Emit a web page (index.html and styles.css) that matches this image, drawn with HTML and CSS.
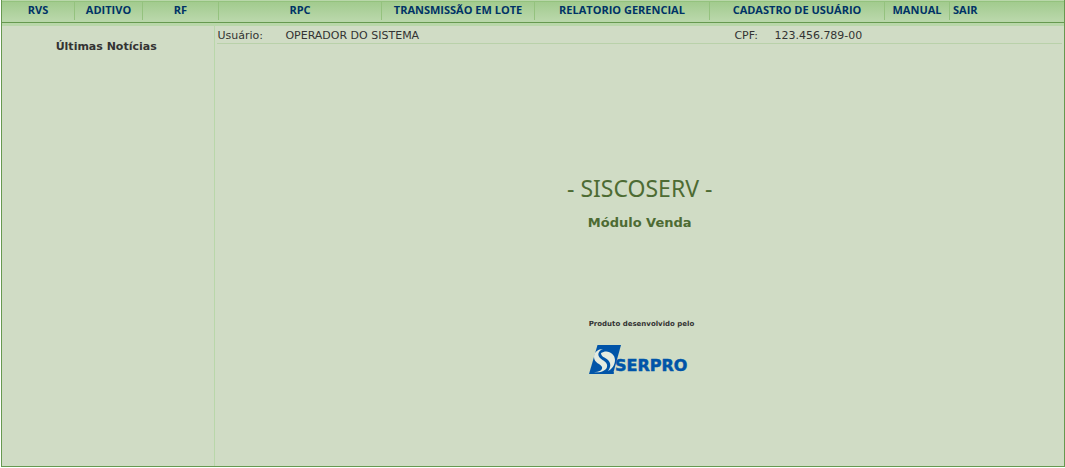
FILE: index.html
```html
<!DOCTYPE html>
<html lang="pt-BR">
<head>
<meta charset="utf-8">
<title>SISCOSERV - Módulo Venda</title>
<link rel="stylesheet" href="styles.css">
</head>
<body>
<div class="page">
  <nav class="menu">
    <a href="#">RVS</a>
    <a href="#">ADITIVO</a>
    <a href="#">RF</a>
    <a href="#">RPC</a>
    <a href="#">TRANSMISSÃO EM LOTE</a>
    <a href="#">RELATORIO GERENCIAL</a>
    <a href="#">CADASTRO DE USUÁRIO</a>
    <a href="#">MANUAL</a>
    <a href="#" class="exit">SAIR</a>
  </nav>
  <div class="body">
    <aside class="news"><h2>Últimas Notícias</h2></aside>
    <main class="main">
      <div class="user">
        <span>Usuário:</span><span>OPERADOR DO SISTEMA</span>
        <span>CPF:</span><span>123.456.789-00</span>
      </div>
      <section class="intro">
        <h1>- SISCOSERV -</h1>
        <p class="module">Módulo Venda</p>
        <div class="credit">
          <p>Produto desenvolvido pelo</p>
          <svg class="logo" width="108" height="31" viewBox="0 0 108 31" role="img" aria-label="SERPRO">
            <path class="mark" d="M8.500 0H32L24 29H0Z"/>
            <path class="swirl" d="M14 4C9 6 8 10 11 13C14 16 19 17 18 22C17 26 11 28 5 27C10 27 14 25 13 22C12 19 5 18 5 12C5 7 9 4 14 4Z"/>
            <path class="swirl" d="M12 8C18 4 26 8 26 15C26 20 23 24 19 26C22 22 22 18 19 15C16 12 12 12 12 8Z"/>
            <circle class="dot" cx="24" cy="28" r="1"/>
            <text x="26" y="26">SERPRO</text>
          </svg>
        </div>
      </section>
    </main>
  </div>
</div>
</body>
</html>
```
FILE: styles.css
```css
* { box-sizing: border-box; }
body {
  margin: 0;
  background: #fff;
  color: #333;
  font: 11px/14px "DejaVu Sans", Verdana, sans-serif;
}
h1, h2, p { margin: 0; }
.page {
  display: flex;
  flex-direction: column;
  min-height: calc(100vh - 1px);
  margin: 0 0 1px 1px;
  border: 1px solid #669950;
  border-top: 0;
  background: #d0dcc5;
}
.menu {
  display: grid;
  grid-template-columns: 73fr 68fr 76fr 163fr 153fr 175fr 175fr 65fr 114fr;
  height: 23px;
  padding: 1px 0 2px;
  border-top: 1px solid #b9d7aa;
  border-bottom: 1px solid #669950;
  background: linear-gradient(#94c27e 1px, #a2cb8e 1px, #b9d7aa 19px);
}
.menu a {
  border-right: 1px solid #94c27e;
  color: #003366;
  font: bold 11px/16px "Open Sans", Tahoma, sans-serif;
  text-align: center;
  text-decoration: none;
  white-space: nowrap;
}
.menu .exit {
  padding-left: 3px;
  border-right: 0;
  text-align: left;
}
.body {
  display: flex;
  flex: 1;
  border-top: 3px solid #b9d7aa;
}
.news {
  flex: 0 0 calc(20% + 1px);
  padding: 14px 4px 0 0;
  border-right: 1px solid #b9d7aa;
  text-align: center;
}
.news h2 { font-size: 11px; line-height: 14px; }
.main { flex: 1; padding: 0 2px; }
.user {
  display: grid;
  grid-template-columns: 68px 449px 40px 1fr;
  height: 18px;
  padding-top: 3px;
  border-bottom: 1px solid #b9d1aa;
}
.intro {
  display: flex;
  flex-direction: column;
  align-items: center;
  padding-top: 128px;
  color: #4d6b33;
}
.intro h1 {
  font: 23px/32px "Noto Sans", sans-serif;
}
.module {
  padding-top: 11px;
  font-size: 13px;
  line-height: 16px;
  font-weight: bold;
}
.credit {
  padding: 88px 0 0 6px;
  color: #333;
  font-size: 7px;
  line-height: 10px;
  font-weight: bold;
}
.logo { display: block; margin-top: 16px; }
.mark, .dot { fill: #0054a8; }
.swirl { fill: #e4ebe0; }
.logo text {
  fill: #0054a8;
  stroke: #0054a8;
  stroke-width: 0.5;
  font: bold 16px "DejaVu Sans", sans-serif;
}
```
